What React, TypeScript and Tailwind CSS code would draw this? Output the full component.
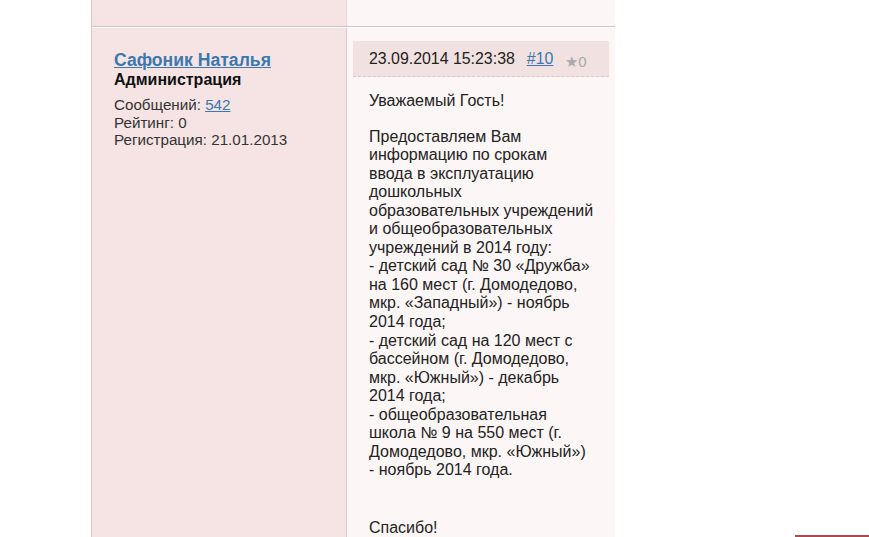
const bodyLines = [
  'Предоставляем Вам',
  'информацию по срокам',
  'ввода в эксплуатацию',
  'дошкольных',
  'образовательных учреждений',
  'и общеобразовательных',
  'учреждений в 2014 году:',
  '- детский сад № 30 «Дружба»',
  'на 160 мест (г. Домодедово,',
  'мкр. «Западный») - ноябрь',
  '2014 года;',
  '- детский сад на 120 мест с',
  'бассейном (г. Домодедово,',
  'мкр. «Южный») - декабрь',
  '2014 года;',
  '- общеобразовательная',
  'школа № 9 на 550 мест (г.',
  'Домодедово, мкр. «Южный»)',
  '- ноябрь 2014 года.',
]

export default function App() {
  return (
    <div
      className="relative h-[537px] overflow-hidden bg-white text-[15px] text-[#222]"
      style={{ fontFamily: '"Liberation Sans", Arial, sans-serif' }}
    >
      <div className="ml-[91px] w-[524px] border-l border-[#d6c8c8]">
        {/* previous post tail */}
        <div className="flex h-[27px] border-b border-[#cfc6c6]">
          <div className="w-[255px] border-r border-[#e8d6d6] bg-[#f6e4e4]" />
          <div className="flex-1 bg-[#fdf6f6]" />
        </div>

        <div className="flex h-[520px] border-t border-white">
          <div className="w-[255px] border-r border-[#e0cfcf] bg-[#f6e4e4] px-[22px] pt-[22px]">
            <a
              href="#"
              className="block text-[17.6px] font-bold leading-[21px] text-[#3a78ad] underline"
            >
              Сафоник Наталья
            </a>
            <div className="text-[16px] font-bold leading-[18px] text-[#111]">Администрация</div>
            <div className="mt-[7px] text-[15.2px] leading-[17.5px] text-[#333]">
              <div>
                Сообщений:{' '}
                <a href="#" className="text-[#3a78ad] underline">
                  542
                </a>
              </div>
              <div>Рейтинг: 0</div>
              <div>Регистрация: 21.01.2013</div>
            </div>
          </div>

          <div className="flex-1 bg-[#fdf6f6] px-[6px] pt-[13px]">
            <div className="flex h-[36px] items-center border-b border-dashed border-[#d9caca] bg-[#f1e1e1] pl-[16px] text-[15.9px]">
              <span>23.09.2014 15:23:38</span>
              <a href="#" className="ml-[12px] text-[#3a78ad] underline">
                #10
              </a>
              <span className="ml-[12px] mt-[8px] text-[15px] text-[#aaa]">
                <span className="text-[15px]">★</span>0
              </span>
            </div>
            <div className="whitespace-nowrap pl-[16px] pt-[15px] text-[16px] leading-[18.55px] text-[#222]">
              <p>Уважаемый Гость!</p>
              <p className="mt-[17px]">
                {bodyLines.map((line, i) => (
                  <span key={i} className="block">
                    {line}
                  </span>
                ))}
              </p>
              <p className="mt-[39px]">Спасибо!</p>
            </div>
          </div>
        </div>
      </div>

      <div className="absolute left-[795px] top-[535px] h-[2px] w-[74px] bg-[#b04a4a]" />
    </div>
  )
}
